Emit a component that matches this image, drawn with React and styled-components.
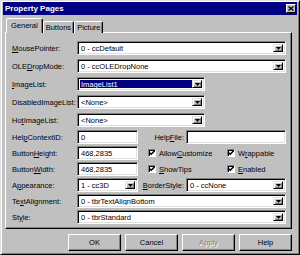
import React from 'react';
import styled, { createGlobalStyle } from 'styled-components';

const GlobalStyle = createGlobalStyle`
  html, body {
    margin: 0;
    padding: 0;
    background: #c0c0c0;
  }
  body {
    font-family: "Liberation Sans", Arial, sans-serif;
    font-size: 7.5px;
    color: #000;
  }
`;

const Window = styled.div`
  width: 300px;
  height: 255px;
  box-sizing: border-box;
  background: #c0c0c0;
  border: 1px solid;
  border-color: #dfdfdf #000 #000 #dfdfdf;
  box-shadow: inset 1px 1px #fff, inset -1px -1px #808080;
  padding: 1px 2px 2px 2px;
  display: flex;
  flex-direction: column;
`;

const TitleBar = styled.div`
  height: 13px;
  background: #000080;
  color: #fff;
  display: flex;
  align-items: center;
  justify-content: space-between;
  padding: 0 1px 0 2px;
  font-weight: bold;
  font-size: 8px;
`;

const CloseButton = styled.div`
  width: 10px;
  height: 9px;
  box-sizing: border-box;
  background: #c0c0c0;
  border: 1px solid;
  border-color: #fff #000 #000 #fff;
  display: flex;
  align-items: center;
  justify-content: center;
`;

const Tabs = styled.div`
  display: flex;
  align-items: flex-end;
  margin: 3px 0 0 3px;
  position: relative;
  z-index: 1;
`;

const Tab = styled.div`
  box-sizing: border-box;
  height: ${p => (p.$active ? 15 : 12)}px;
  padding: 0 ${p => (p.$active ? 4 : 2)}px;
  margin: 0 ${p => (p.$active ? 0 : 0)}px -1px 0;
  background: #c0c0c0;
  border: 1px solid;
  border-bottom: none;
  border-color: #fff #000 transparent #fff;
  box-shadow: inset -1px 0 #808080;
  border-radius: 2px 2px 0 0;
  display: flex;
  align-items: center;
  padding-bottom: ${p => (p.$active ? 2 : 0)}px;
`;

const Panel = styled.div`
  height: 197px;
  box-sizing: border-box;
  margin: 0 5px 0 2px;
  border: 1px solid;
  border-color: #fff #000 #000 #fff;
  box-shadow: inset -1px -1px #808080;
  padding: 8px 5px 0 6px;
  display: flex;
  flex-direction: column;
`;

const Group = styled.div`
  display: flex;
  flex-direction: column;
  gap: ${p => p.$gap}px;
  margin-bottom: ${p => p.$after || 0}px;
`;

const Row = styled.div`
  display: flex;
  align-items: center;
  height: ${p => p.$h}px;
`;

const Label = styled.span`
  width: ${p => p.$w}px;
  flex: none;
  white-space: nowrap;
  text-align: ${p => (p.$right ? 'right' : 'left')};
  padding-right: ${p => (p.$right ? 2 : 0)}px;
  box-sizing: border-box;
`;

const Field = styled.div`
  box-sizing: border-box;
  height: 100%;
  width: ${p => (p.$w ? `${p.$w}px` : 'auto')};
  flex: ${p => (p.$w ? 'none' : '1')};
  background: #fff;
  border: 1px solid;
  border-color: #808080 #fff #fff #808080;
  box-shadow: inset 1px 1px #000, inset -1px -1px #dfdfdf;
  display: flex;
  align-items: center;
  padding: 2px;
`;

const FieldText = styled.span`
  flex: 1;
  align-self: stretch;
  display: flex;
  align-items: center;
  padding-left: 1px;
  white-space: nowrap;
  overflow: hidden;
  background: ${p => (p.$selected ? '#000080' : 'transparent')};
  color: ${p => (p.$selected ? '#fff' : '#000')};
`;

const DropButton = styled.div`
  width: 10px;
  align-self: stretch;
  box-sizing: border-box;
  background: #c0c0c0;
  border: 1px solid;
  border-color: #dfdfdf #000 #000 #dfdfdf;
  box-shadow: inset 1px 1px #fff, inset -1px -1px #808080;
  display: flex;
  align-items: center;
  justify-content: center;
`;

const CheckItem = styled.label`
  display: flex;
  align-items: center;
  gap: 3px;
  width: ${p => p.$w}px;
  margin-left: ${p => p.$ml || 0}px;
  flex: none;
  white-space: nowrap;
`;

const CheckBox = styled.span`
  width: 8px;
  height: 8px;
  box-sizing: border-box;
  background: #fff;
  border: 1px solid;
  border-color: #808080 #fff #fff #808080;
  box-shadow: inset 1px 1px #000;
  display: flex;
  align-items: center;
  justify-content: center;
`;

const Buttons = styled.div`
  display: flex;
  justify-content: flex-end;
  gap: 4px;
  margin: 5px 5px 0 0;
`;

const Button = styled.div`
  width: 53px;
  height: 17px;
  box-sizing: border-box;
  border: 1px solid;
  border-color: #fff #000 #000 #fff;
  box-shadow: inset -1px -1px #808080;
  display: flex;
  align-items: center;
  justify-content: center;
  color: ${p => (p.$disabled ? '#808080' : '#000')};
  text-shadow: ${p => (p.$disabled ? '1px 1px #fff' : 'none')};
`;

const Arrow = () => (
  <svg width="5" height="3" viewBox="0 0 5 3">
    <polygon points="0,0 5,0 2.5,3" fill="#000" />
  </svg>
);

const Combo = ({ value, w, selected }) => (
  <Field $w={w}>
    <FieldText $selected={selected}>{value}</FieldText>
    <DropButton>
      <Arrow />
    </DropButton>
  </Field>
);

const Text = ({ value, w }) => (
  <Field $w={w}>
    <FieldText>{value}</FieldText>
  </Field>
);

const Check = ({ children, w, ml }) => (
  <CheckItem $w={w} $ml={ml}>
    <CheckBox>
      <svg width="6" height="6" viewBox="0 0 7 7">
        <polyline points="0.5,3 2.5,5 6.5,1" fill="none" stroke="#000" strokeWidth="1.6" />
      </svg>
    </CheckBox>
    <span>{children}</span>
  </CheckItem>
);

const LABEL = 65;
const SMALL = 61;

export default function App() {
  return (
    <>
      <GlobalStyle />
      <Window>
        <TitleBar>
          <span>Property Pages</span>
          <CloseButton>
            <svg width="6" height="5" viewBox="0 0 6 5">
              <path d="M0.5 0.5 L5.5 4.5 M5.5 0.5 L0.5 4.5" stroke="#000" strokeWidth="1.3" />
            </svg>
          </CloseButton>
        </TitleBar>
        <Tabs>
          <Tab $active>General</Tab>
          <Tab>Buttons</Tab>
          <Tab>Picture</Tab>
        </Tabs>
        <Panel>
          <Group $gap={4} $after={3}>
            <Row $h={14}>
              <Label $w={LABEL}><u>M</u>ousePointer:</Label>
              <Combo value="0 - ccDefault" />
            </Row>
            <Row $h={14}>
              <Label $w={LABEL}>OLE<u>D</u>ropMode:</Label>
              <Combo value="0 - ccOLEDropNone" />
            </Row>
            <Row $h={14}>
              <Label $w={LABEL}><u>I</u>mageList:</Label>
              <Combo value="ImageList1" w={128} selected />
            </Row>
            <Row $h={14}>
              <Label $w={LABEL}>DisabledImageList:</Label>
              <Combo value="<None>" w={128} />
            </Row>
            <Row $h={14}>
              <Label $w={LABEL}>Ho<u>t</u>ImageList:</Label>
              <Combo value="<None>" w={128} />
            </Row>
          </Group>
          <Group $gap={2}>
            <Row $h={14}>
              <Label $w={LABEL}>Hel<u>p</u>ContextID:</Label>
              <Text value="0" w={SMALL} />
              <Label $w={48} $right>Help<u>F</u>ile:</Label>
              <Text />
            </Row>
            <Row $h={14}>
              <Label $w={LABEL}>Button<u>H</u>eight:</Label>
              <Text value="468,2835" w={SMALL} />
              <Check w={79} ml={10}>Allow<u>C</u>ustomize</Check>
              <Check>W<u>r</u>appable</Check>
            </Row>
            <Row $h={14}>
              <Label $w={LABEL}>Button<u>W</u>idth:</Label>
              <Text value="468,2835" w={SMALL} />
              <Check w={79} ml={10}><u>S</u>howTips</Check>
              <Check><u>E</u>nabled</Check>
            </Row>
            <Row $h={14}>
              <Label $w={LABEL}>A<u>p</u>pearance:</Label>
              <Combo value="1 - cc3D" w={SMALL} />
              <Label $w={48} $right><u>B</u>orderStyle:</Label>
              <Combo value="0 - ccNone" />
            </Row>
            <Row $h={14}>
              <Label $w={LABEL}>Te<u>x</u>tAlignment:</Label>
              <Combo value="0 - tbrTextAlignBottom" />
            </Row>
            <Row $h={14}>
              <Label $w={LABEL}>St<u>y</u>le:</Label>
              <Combo value="0 - tbrStandard" />
            </Row>
          </Group>
        </Panel>
        <Buttons>
          <Button>OK</Button>
          <Button>Cancel</Button>
          <Button $disabled>Apply</Button>
          <Button>Help</Button>
        </Buttons>
      </Window>
    </>
  );
}
